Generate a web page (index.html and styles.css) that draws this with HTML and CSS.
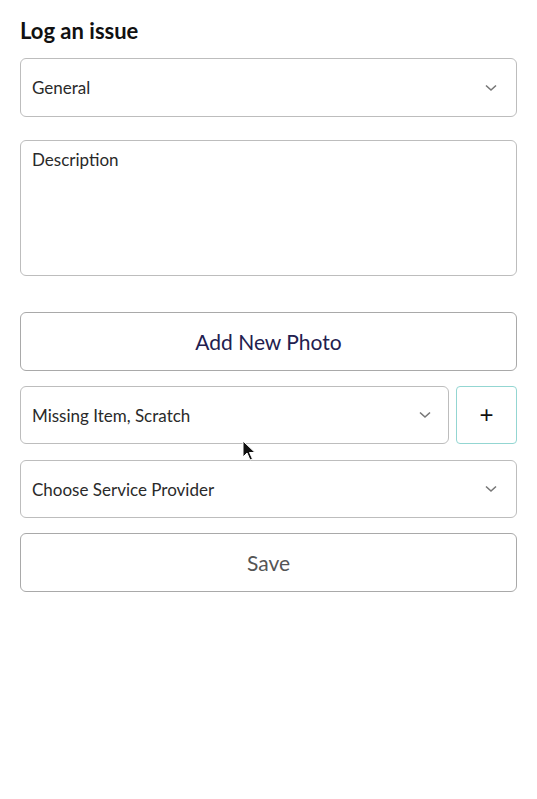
FILE: index.html
```html
<!DOCTYPE html>
<html lang="en">
<head>
    <meta charset="UTF-8">
    <meta name="viewport" content="width=device-width, initial-scale=1.0">
    <title>Log an issue</title>
    <link rel="stylesheet" href="styles.css">
</head>
<body>

    <div class="issue-form">
        <h1>Log an issue</h1>

        <div class="field select-field category">
            <span>General</span>
            <svg class="chevron" width="12" height="8" viewBox="0 0 12 8"><path d="M1 1.5 L6 6 L11 1.5" /></svg>
        </div>

        <div class="field textarea-field">Description</div>

        <button class="action-button photo-button">Add New Photo</button>

        <div class="tag-row">
            <div class="field select-field tags">
                <span>Missing Item, Scratch</span>
                <svg class="chevron" width="12" height="8" viewBox="0 0 12 8"><path d="M1 1.5 L6 6 L11 1.5" /></svg>
            </div>
            <button class="plus-button">+</button>
            <svg class="cursor" width="14" height="22" viewBox="0 0 14 22"><path d="M1 1 L1 17 L5 13 L8 20 L10.5 19 L7.5 12.5 L13 12.5 Z" /></svg>
        </div>

        <div class="field select-field provider">
            <span>Choose Service Provider</span>
            <svg class="chevron" width="12" height="8" viewBox="0 0 12 8"><path d="M1 1.5 L6 6 L11 1.5" /></svg>
        </div>

        <button class="action-button save-button">Save</button>
    </div>

</body>
</html>
```

FILE: styles.css
```css
body {
    margin: 0;
    font-family: Lato, "Open Sans", Arial, sans-serif;
    background: #ffffff;
    color: #222222;
}

.issue-form {
    width: 497px;
    padding: 17px 20px 0 20px;
    display: flex;
    flex-direction: column;
}

h1 {
    font-size: 22px;
    font-weight: 700;
    margin: 0 0 14px 0;
    color: #111111;
    line-height: 27px;
}

.field {
    box-sizing: border-box;
    border: 1.5px solid #bdbdbd;
    border-radius: 6px;
    background: #ffffff;
    font-size: 17px;
    color: #2a2a2a;
}

.select-field {
    height: 59px;
    display: flex;
    align-items: center;
    justify-content: space-between;
    padding: 0 19px 0 11px;
}

.chevron path {
    fill: none;
    stroke: #777777;
    stroke-width: 1.6;
}

.textarea-field {
    height: 136px;
    margin-top: 23px;
    padding: 8px 11px;
}

.action-button {
    box-sizing: border-box;
    height: 59px;
    border: 1.5px solid #a9a9a9;
    border-radius: 6px;
    background: #ffffff;
    font-family: inherit;
    font-size: 21px;
    cursor: pointer;
}

.photo-button {
    margin-top: 36px;
    color: #22204f;
}

.tag-row {
    display: flex;
    gap: 7px;
    margin-top: 15px;
    position: relative;
}

.tags {
    flex: 1;
    height: 58px;
    padding-right: 17px;
}

.plus-button {
    box-sizing: border-box;
    width: 61px;
    height: 58px;
    border: 1.5px solid #93d6d2;
    border-radius: 4px;
    background: #ffffff;
    font-size: 24px;
    font-family: Arial, sans-serif;
    color: #111111;
    cursor: pointer;
}

.cursor {
    position: absolute;
    left: 222px;
    top: 54px;
}

.cursor path {
    fill: #111111;
    stroke: #ffffff;
    stroke-width: 1;
}

.provider {
    margin-top: 16px;
    height: 58px;
}

.save-button {
    margin-top: 15px;
    color: #555555;
}
```
